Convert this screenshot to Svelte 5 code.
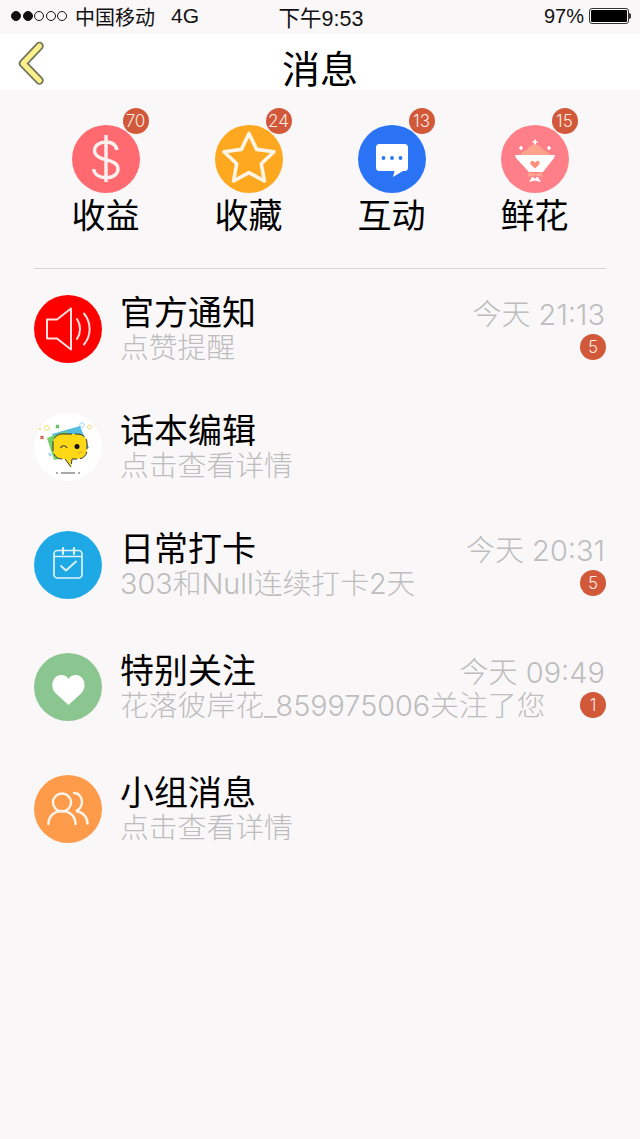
<script lang="ts">
  const tabs = [
    { label: '收益', count: 70, color: '#fe6a70', icon: 'dollar' },
    { label: '收藏', count: 24, color: '#fea81f', icon: 'star' },
    { label: '互动', count: 13, color: '#2b73f5', icon: 'chat' },
    { label: '鲜花', count: 15, color: '#fe7f88', icon: 'flower' }
  ];

  const rows = [
    { title: '官方通知', sub: '点赞提醒', time: '今天 21:13', count: 5, color: '#fe0000', icon: 'speaker', short: true },
    { title: '话本编辑', sub: '点击查看详情', color: '#ffffff', icon: 'bubble', short: true },
    { title: '日常打卡', sub: '303和Null连续打卡2天', time: '今天 20:31', count: 5, color: '#1ea8e6', icon: 'calendar' },
    { title: '特别关注', sub: '花落彼岸花_859975006关注了您', time: '今天 09:49', count: 1, color: '#8bc690', icon: 'heart' },
    { title: '小组消息', sub: '点击查看详情', color: '#fe9b4a', icon: 'group' }
  ];
</script>

{#snippet glyph(name)}
  <svg viewBox="0 0 68 68" width="68" height="68" aria-hidden="true">
    {#if name === 'dollar'}
      <path d="M45 25c-1-5-5-8-11-8-6.500 0-11.500 3.200-11.500 8.700 0 5.500 5 7.500 11.500 9 7 1.700 12 3.800 12 9.300 0 5.700-5.500 8.700-12 8.700-6.500 0-11.500-3.200-12.500-8.700M34 10v47" fill="none" stroke="#fff0f0" stroke-width="3.400"/>
    {:else if name === 'star'}
      <path d="M34 8.500l7.600 15.900 17.400 2.400-12.700 12 3.100 17.200L34 47.700 18.600 56l3.100-17.200L9 26.800l17.400-2.400z" fill="none" stroke="#fff5e6" stroke-width="3.600" stroke-linejoin="round"/>
    {:else if name === 'chat'}
      <path d="M21.500 19h25a3.500 3.500 0 0 1 3.500 3.500v20a3.500 3.500 0 0 1-3.500 3.500H45l-10 6 1.500-6h-15a3.500 3.500 0 0 1-3.500-3.500v-20a3.500 3.500 0 0 1 3.500-3.500z" fill="#fff"/>
      <circle cx="25.500" cy="33" r="1.900" fill="#2b73f5"/>
      <circle cx="34" cy="33" r="1.900" fill="#2b73f5"/>
      <circle cx="42.500" cy="33" r="1.900" fill="#2b73f5"/>
    {:else if name === 'flower'}
      <path d="M20 30c0-3 3-4 6-5 1-2 2.500-4 4-4 1.500-2 6.500-2 8 0 1.500 0 3 2 4 4 3 1 6 2 6 5z" fill="#ffa48c"/>
      <path d="M14 30h40l-1 3-11 14H28L15 33z" fill="#fff"/>
      <path d="M27 47l7 2 7-2v5l-7-1.500-7 1.500z" fill="#ffa48c"/>
      <path d="M28 57l3-5h1.500l1.500 2 1.500-2H37l3 5-6-1.500z" fill="#fff"/>
      <path d="M34 43.500l-3.800-3.600c-2-2-.3-4.700 1.900-4 .9.300 1.500.9 1.900 1.500.4-.6 1-1.200 1.900-1.500 2.200-.7 3.900 2 1.900 4z" fill="#fe8f7f"/>
      <path d="M34 14.500v5M31.500 17h5M20 21v4M18 23h4M48 21v4M46 23h4" stroke="#fff" stroke-width="1.700"/>
    {:else if name === 'speaker'}
      <path d="M13 24.500h10L37 13.500v41L23 43.500H13z" fill="none" stroke="#ffe0e0" stroke-width="2" stroke-linejoin="round"/>
      <path d="M43 24c4 6 4 14 0 20M50 18.500c7.500 9 7.500 22 0 31" fill="none" stroke="#ffe0e0" stroke-width="2" stroke-linecap="round"/>
    {:else if name === 'bubble'}
      <circle cx="6" cy="16" r="1" fill="#f3d45a"/>
      <circle cx="13" cy="15" r="2.500" fill="none" stroke="#f3e27a" stroke-width="1"/>
      <path d="M6.500 23l3 3m0-3l-3 3" stroke="#d8604a" stroke-width="1.500"/>
      <path d="M22 12l3 3m0-3l-3 3" stroke="#58b858" stroke-width="1.500"/>
      <circle cx="48" cy="12" r="2.300" fill="none" stroke="#a5d6ee" stroke-width="1"/>
      <circle cx="55.500" cy="14" r="2" fill="none" stroke="#f3dd80" stroke-width="1"/>
      <path d="M15 40l2 3" stroke="#7fc7e8" stroke-width="1.500"/>
      <path d="M18 21l28-8 9 22-30 10z" fill="#54bde0"/>
      <path d="M13 25l19-7 8 24-20 5z" fill="#74d06a"/>
      <path d="M28 21h16a9 9 0 0 1 9 9v7a9 9 0 0 1-9 9h-6l-1 8-6-8h-3a9 9 0 0 1-9-9v-7a9 9 0 0 1 9-9z" fill="#fdd817" stroke="#333" stroke-width="1" stroke-dasharray="10 3"/>
      <path d="M26.500 35c1-3 5.500-3 6.500 0" fill="none" stroke="#333" stroke-width="1.100"/>
      <circle cx="43" cy="33.500" r="2.500" fill="#111"/>
      <path d="M44 39l1.500 1.500M46.500 38.500l1.500 1.500" stroke="#e88a4a" stroke-width="1"/>
      <path d="M22 60h2M27 60h14M44 60h2" stroke="#555" stroke-width="1.200"/>
    {:else if name === 'calendar'}
      <rect x="20" y="19.500" width="28" height="27.500" rx="3.500" fill="none" stroke="#dff3fc" stroke-width="1.700"/>
      <path d="M20 25.500h28" stroke="#dff3fc" stroke-width="1.500"/>
      <path d="M29 17v6M40 17v6" stroke="#dff3fc" stroke-width="2.200" stroke-linecap="round"/>
      <path d="M27 35l5 4.500 10-9" fill="none" stroke="#dff3fc" stroke-width="1.800" stroke-linecap="round" stroke-linejoin="round"/>
    {:else if name === 'heart'}
      <path d="M34.500 52L22 40.500c-7-6.500-3-18.500 5-18.500 3.500 0 6 1.500 7.500 4 1.500-2.500 4-4 7.500-4 8 0 12 12 5 18.500z" fill="#fff"/>
    {:else if name === 'group'}
      <circle cx="28" cy="27.500" r="9" fill="none" stroke="#fff4ea" stroke-width="2.400"/>
      <path d="M14.500 49c0-8 6-13 13.500-13s13.500 5 13.500 13" fill="none" stroke="#fff4ea" stroke-width="2.400" stroke-linecap="round"/>
      <path d="M40 18c5 0 8 4.500 8 9s-3 8-6 9c6.500 1 11.500 6 11.500 12.500" fill="none" stroke="#fff4ea" stroke-width="2.400" stroke-linecap="round"/>
    {/if}
  </svg>
{/snippet}

<div class="page">
  <div class="status">
    <div class="carrier">
      <span class="dots"><i class="on"></i><i class="on"></i><i></i><i></i><i></i></span>
      <span class="name">中国移动</span>
      <span class="net">4G</span>
    </div>
    <div class="clock">下午9:53</div>
    <div class="power">
      <span>97%</span>
      <span class="battery"><b></b></span>
      <span class="nub"></span>
    </div>
  </div>

  <header class="nav">
    <svg class="back" viewBox="0 0 30 44" width="30" height="44" aria-hidden="true">
      <path d="M24.500 5L8 22.500l16.500 17" fill="none" stroke="#75755f" stroke-width="8.500" stroke-linecap="round" stroke-linejoin="round"/>
      <path d="M24.500 5L8 22.500l16.500 17" fill="none" stroke="#fbf18c" stroke-width="5" stroke-linecap="round" stroke-linejoin="round"/>
    </svg>
    <h1>消息</h1>
  </header>

  <section class="tabs">
    {#each tabs as tab}
      <div class="tab">
        <div class="tab-icon" style="background: {tab.color}">
          {@render glyph(tab.icon)}
          <span class="badge count">{tab.count}</span>
        </div>
        <div class="tab-label">{tab.label}</div>
      </div>
    {/each}
  </section>

  <ul class="list">
    {#each rows as row}
      <li class="row" class:short={row.short}>
        <div class="row-icon" style="background: {row.color}">
          {@render glyph(row.icon)}
        </div>
        <div class="row-body">
          <div class="line">
            <span class="title">{row.title}</span>
            {#if row.time}<span class="time">{row.time}</span>{/if}
          </div>
          <div class="line">
            <span class="sub">{row.sub}</span>
            {#if row.count}<span class="badge small">{row.count}</span>{/if}
          </div>
        </div>
      </li>
    {/each}
  </ul>
</div>

<style>
  :global(body) {
    margin: 0;
    background: #faf7f9;
  }

  .page {
    width: 640px;
    height: 1139px;
    overflow: hidden;
    background: #faf7f9;
    color: #000;
    font-family: "Liberation Sans", "Noto Sans CJK SC", sans-serif;
  }

  .status {
    height: 34px;
    display: grid;
    grid-template-columns: 1fr auto 1fr;
    align-items: center;
    padding: 0 9px 2px 11px;
    box-sizing: border-box;
    font-size: 20px;
    color: #111;
  }

  .carrier {
    display: flex;
    align-items: center;
  }

  .dots {
    display: flex;
    gap: 1.500px;
    margin-right: 8px;
  }

  .dots i {
    width: 10px;
    height: 10px;
    box-sizing: border-box;
    border: 1px solid #111;
    border-radius: 50%;
  }

  .dots i.on {
    background: #111;
  }

  .net {
    margin-left: 16px;
    font-size: 21px;
  }

  .clock {
    font-size: 21.500px;
  }

  .power {
    display: flex;
    align-items: center;
    justify-content: flex-end;
  }

  .battery {
    width: 40px;
    height: 16px;
    margin-left: 5px;
    padding: 1px;
    border: 1px solid #333;
    border-radius: 3px;
    box-sizing: border-box;
    display: flex;
  }

  .battery b {
    flex: 1;
    background: #000;
    border-radius: 1px;
  }

  .nub {
    width: 2px;
    height: 6px;
    background: #333;
    border-radius: 0 2px 2px 0;
  }

  .nav {
    position: relative;
    height: 56px;
    background: #fff;
  }

  .nav h1 {
    margin: 0;
    padding-top: 13px;
    font-size: 38px;
    font-weight: 400;
    line-height: 46px;
    text-align: center;
  }

  .back {
    position: absolute;
    left: 15px;
    top: 7px;
  }

  .tabs {
    display: grid;
    grid-template-columns: repeat(4, 143px);
    margin: 0 34px;
    padding-top: 35px;
    height: 143px;
    border-bottom: 1px solid #d6d4d5;
  }

  .tab {
    display: flex;
    flex-direction: column;
    align-items: center;
  }

  .tab-icon,
  .row-icon {
    position: relative;
    width: 68px;
    height: 68px;
    border-radius: 50%;
    flex: none;
  }

  .tab-icon svg,
  .row-icon svg {
    display: block;
  }

  .tab-label {
    font-size: 34px;
    line-height: 46px;
  }

  .badge {
    display: flex;
    align-items: center;
    justify-content: center;
    border-radius: 50%;
    background: #d2583a;
    color: #fde9e0;
    font-family: Inter, sans-serif;
    font-weight: 300;
  }

  .count {
    position: absolute;
    top: -17px;
    right: -9px;
    width: 26px;
    height: 26px;
    font-size: 17px;
  }

  .small {
    width: 26px;
    height: 26px;
    margin-top: 5px;
    font-size: 17px;
    flex: none;
  }

  .list {
    list-style: none;
    margin: 0;
    padding: 26px 34px 0;
  }

  .row {
    display: flex;
    gap: 18px;
    height: 122px;
  }

  .row.short {
    height: 118px;
  }

  .row-body {
    flex: 1;
    min-width: 0;
  }

  .line {
    display: flex;
    align-items: center;
    justify-content: space-between;
    height: 33px;
  }

  .title {
    font-size: 34px;
    line-height: 36px;
    padding-top: 2px;
  }

  .sub {
    font-family: Inter, "Noto Sans CJK SC", sans-serif;
    font-size: 28.800px;
    font-weight: 300;
    color: #bdbdbd;
    padding-top: 1px;
    white-space: nowrap;
  }

  .time {
    font-family: Inter, "Noto Sans CJK SC", sans-serif;
    font-size: 29px;
    font-weight: 300;
    color: #bdbdbd;
    padding-right: 1px;
  }
</style>
